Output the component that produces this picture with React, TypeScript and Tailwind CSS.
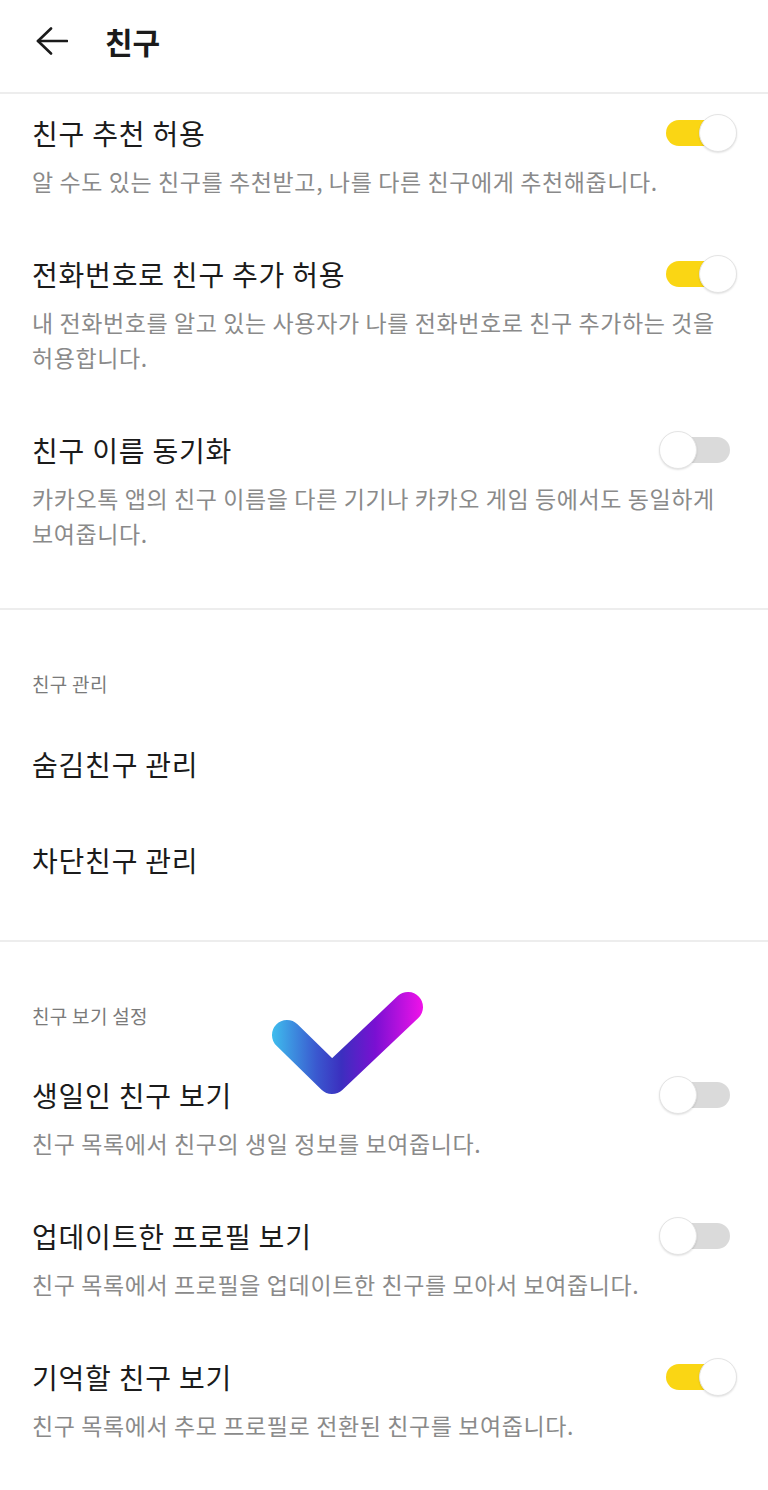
import React from "react";

const font = { fontFamily: '"Noto Sans CJK KR", "Noto Sans", sans-serif' };

function Toggle({ on }: { on: boolean }) {
  return (
    <div className="relative w-[78px] h-[38px] shrink-0">
      <div
        className={
          "absolute left-[7px] right-[7px] top-[6px] h-[26px] rounded-full " +
          (on ? "bg-[#fad614]" : "bg-[#dadada]")
        }
      />
      <div
        className={
          "absolute top-0 w-[38px] h-[38px] rounded-full bg-white border border-[#e4e4e4] shadow-[0_1px_2px_rgba(0,0,0,0.12)] " +
          (on ? "right-0" : "left-0")
        }
      />
    </div>
  );
}

type Item = { title: string; desc: string[]; on: boolean };

function SettingItem({ item }: { item: Item }) {
  return (
    <div className="flex flex-col">
      <div className="flex items-center justify-between h-[36px]">
        <span className="text-[28px] leading-[36px] tracking-[0.8px] text-[#1b1b1b]">{item.title}</span>
        <Toggle on={item.on} />
      </div>
      <div className="mt-[13px]">
        {item.desc.map((line) => (
          <div key={line} className="text-[23px] leading-[35px] tracking-[0.6px] text-[#8a8a8a] whitespace-nowrap">
            {line}
          </div>
        ))}
      </div>
    </div>
  );
}

const first: Item[] = [
  { title: "친구 추천 허용", desc: ["알 수도 있는 친구를 추천받고, 나를 다른 친구에게 추천해줍니다."], on: true },
  {
    title: "전화번호로 친구 추가 허용",
    desc: ["내 전화번호를 알고 있는 사용자가 나를 전화번호로 친구 추가하는 것을", "허용합니다."],
    on: true,
  },
  {
    title: "친구 이름 동기화",
    desc: ["카카오톡 앱의 친구 이름을 다른 기기나 카카오 게임 등에서도 동일하게", "보여줍니다."],
    on: false,
  },
];

const view: Item[] = [
  { title: "생일인 친구 보기", desc: ["친구 목록에서 친구의 생일 정보를 보여줍니다."], on: false },
  { title: "업데이트한 프로필 보기", desc: ["친구 목록에서 프로필을 업데이트한 친구를 모아서 보여줍니다."], on: false },
  { title: "기억할 친구 보기", desc: ["친구 목록에서 추모 프로필로 전환된 친구를 보여줍니다."], on: true },
];

export default function App() {
  return (
    <div className="relative w-[768px] h-[1490px] bg-white overflow-hidden" style={font}>
      {/* header */}
      <div className="flex items-center h-[92px] pb-[10px] pl-[36px]">
        <svg width="32" height="28" viewBox="0 0 32 28" fill="none" stroke="#1b1b1b" strokeWidth="2.6" strokeLinecap="round" strokeLinejoin="round">
          <path d="M2 14H31" />
          <path d="M15 1.5L2 14l13 12.5" />
        </svg>
        <span className="ml-[37px] text-[30px] font-bold leading-none text-[#1b1b1b]">친구</span>
      </div>
      <div className="h-[2px] bg-[#ededed]" />

      <div className="flex flex-col gap-[57px] pt-[21px] pb-[57px] pl-[32px] pr-[31px]">
        {first.map((it) => (
          <SettingItem key={it.title} item={it} />
        ))}
      </div>
      <div className="h-[2px] bg-[#ededed]" />

      {/* 친구 관리 */}
      <div className="flex flex-col pt-[61px] pb-[32px] pl-[32px]">
        <div className="text-[19px] leading-[26px] tracking-[0.3px] text-[#7a7a7a]">친구 관리</div>
        <div className="mt-[19px] flex flex-col">
          <div className="h-[96px] flex items-center text-[28px] tracking-[0.8px] text-[#1b1b1b]">숨김친구 관리</div>
          <div className="h-[96px] flex items-center text-[28px] tracking-[0.8px] text-[#1b1b1b]">차단친구 관리</div>
        </div>
      </div>
      <div className="h-[2px] bg-[#ededed]" />

      {/* 친구 보기 설정 */}
      <div className="flex flex-col pt-[61px] pl-[32px] pr-[31px]">
        <div className="text-[19px] leading-[26px] tracking-[0.3px] text-[#7a7a7a]">친구 보기 설정</div>
        <div className="mt-[48px] flex flex-col gap-[57px]">
          {view.map((it) => (
            <SettingItem key={it.title} item={it} />
          ))}
        </div>
      </div>

      {/* check mark overlay */}
      <svg className="absolute left-[260px] top-[980px]" width="180" height="120" viewBox="0 0 180 120" fill="none">
        <defs>
          <linearGradient id="chk" x1="10" y1="0" x2="165" y2="0" gradientUnits="userSpaceOnUse">
            <stop offset="0" stopColor="#3fc2ef" />
            <stop offset="0.3" stopColor="#3a58cf" />
            <stop offset="0.46" stopColor="#3b2fbf" />
            <stop offset="0.68" stopColor="#7a10d2" />
            <stop offset="1" stopColor="#f512ea" />
          </linearGradient>
        </defs>
        <path d="M27 55L72 99L148 27" stroke="url(#chk)" strokeWidth="30" strokeLinecap="round" strokeLinejoin="round" />
      </svg>
    </div>
  );
}
